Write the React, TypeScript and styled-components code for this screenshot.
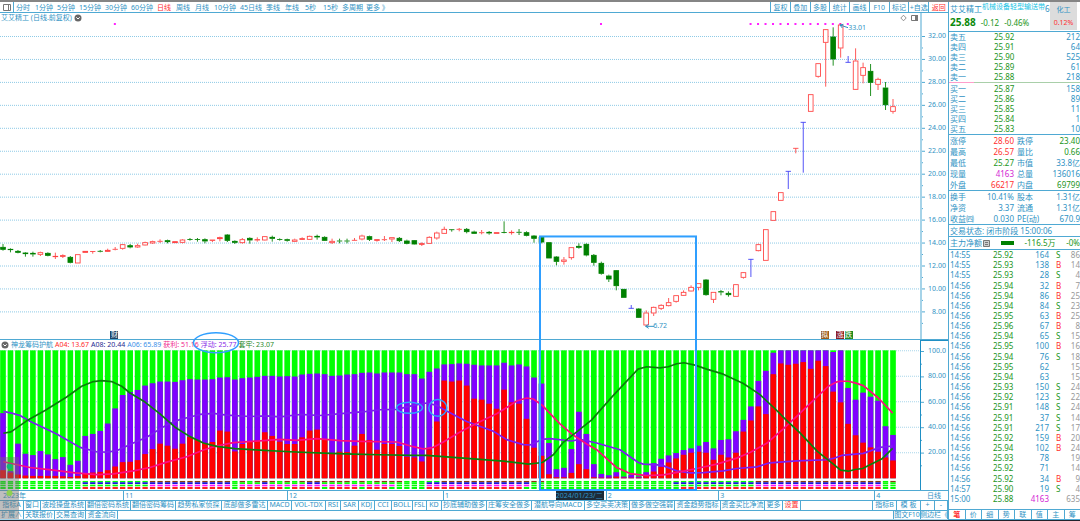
import React from 'react';
import styled, { createGlobalStyle } from 'styled-components';

const c = {
  text: '#2f93c4',
  line: '#4fa9d3',
  pale: '#a6d3e8',
  green: '#1b951b',
  red: '#ff3030',
  magenta: '#d41fd4',
  grey: '#999999',
};

const GlobalStyle = createGlobalStyle`
  * { box-sizing: border-box; }
  body {
    margin: 0;
    background: #fff;
    color: ${c.text};
    font-family: "Noto Sans", "Noto Sans CJK SC", sans-serif;
    font-size: 7px;
    line-height: 10px;
  }
  button {
    margin: 0; padding: 0; border: 0; background: none;
    color: inherit; font: inherit; white-space: nowrap; cursor: pointer;
  }
  table { border-collapse: collapse; width: 100%; }
  td, th { padding: 0; font-weight: normal; }
`;

/* ---------- data ---------- */

type Candle = [kind: 'r' | 'g' | 'b', top: number, bottom: number, high: number, low: number];

const candles: Candle[] = [
  ['g', 141, 149, 132, 152], ['g', 147, 150, 145, 157], ['g', 153, 158, 150, 160], ['g', 158, 162, 156, 170],
  ['g', 159, 163, 155, 170], ['r', 157, 164, 155, 168], ['g', 159, 167, 157, 169], ['r', 168, 171, 158, 177],
  ['r', 166, 170, 163, 174], ['g', 171, 188, 168, 190], ['r', 163, 190, 163, 190], ['r', 153, 158, 153, 158],
  ['r', 154, 155, 153, 161], ['g', 153, 155, 150, 157], ['r', 150, 155, 146, 156], ['r', 147, 149, 141, 151],
  ['r', 133, 146, 132, 149], ['g', 136, 142, 132, 145], ['r', 136, 142, 131, 144], ['r', 127, 136, 125, 137],
  ['r', 124, 130, 122, 132], ['r', 123, 125, 118, 129], ['g', 121, 126, 119, 130], ['r', 124, 129, 124, 129],
  ['r', 119, 128, 117, 130], ['g', 118, 119, 114, 122], ['g', 118, 119, 114, 125], ['g', 118, 124, 115, 130],
  ['r', 119, 122, 119, 126], ['r', 112, 117, 110, 124], ['g', 104, 122, 102, 126], ['g', 123, 128, 121, 132],
  ['r', 118, 129, 114, 131], ['g', 114, 121, 112, 131], ['r', 118, 121, 112, 125], ['r', 109, 121, 108, 122],
  ['g', 111, 116, 107, 125], ['g', 118, 119, 115, 122], ['g', 118, 122, 116, 125], ['r', 119, 125, 116, 126],
  ['r', 115, 119, 112, 120], ['r', 108, 119, 107, 120], ['g', 108, 112, 104, 119], ['g', 111, 122, 109, 123],
  ['r', 123, 129, 116, 132], ['g', 122, 124, 116, 130], ['g', 122, 124, 116, 130], ['r', 120, 122, 114, 123],
  ['r', 107, 118, 104, 121], ['g', 109, 119, 107, 123], ['r', 118, 122, 118, 125], ['r', 118, 120, 108, 123],
  ['r', 112, 118, 112, 126], ['g', 114, 123, 111, 126], ['g', 122, 131, 119, 133], ['g', 121, 133, 120, 134],
  ['r', 130, 134, 127, 138], ['r', 111, 131, 109, 132], ['r', 98, 115, 95, 119], ['r', 87, 101, 80, 102],
  ['g', 88, 90, 87, 95], ['r', 87, 89, 84, 94], ['g', 87, 96, 84, 100], ['g', 95, 101, 92, 102],
  ['r', 97, 99, 90, 103], ['g', 96, 100, 93, 104], ['r', 97, 101, 97, 101], ['g', 97, 98, 64, 100],
  ['r', 96, 99, 91, 104], ['g', 96, 98, 87, 105], ['g', 97, 107, 94, 109], ['g', 107, 116, 105, 128],
  ['g', 111, 127, 108, 130], ['g', 127, 175, 127, 175], ['g', 170, 185, 168, 196], ['r', 179, 185, 171, 194],
  ['r', 142, 174, 142, 179], ['g', 138, 143, 130, 146], ['g', 132, 166, 130, 169], ['g', 165, 188, 162, 197],
  ['g', 189, 221, 185, 224], ['g', 227, 238, 224, 246], ['g', 211, 258, 210, 271], ['g', 267, 293, 267, 293],
  ['b', 325, 325, 315, 325], ['g', 326, 353, 324, 354], ['r', 338, 376, 331, 380], ['r', 321, 340, 320, 348],
  ['r', 315, 326, 313, 330], ['r', 307, 318, 294, 319], ['r', 286, 305, 286, 308], ['r', 276, 287, 271, 288],
  ['r', 261, 274, 256, 275], ['r', 250, 263, 250, 271], ['g', 239, 285, 237, 287], ['r', 276, 299, 276, 309],
  ['g', 274, 277, 270, 286], ['g', 279, 285, 274, 290], ['r', 253, 290, 253, 290], ['r', 217, 233, 216, 236],
  ['b', 178, 178, 178, 231], ['r', 133, 153, 131, 154], ['r', 88, 182, 88, 182], ['r', 34, 62, 34, 62],
  ['r', -23, 2, -23, 2], ['b', -86, -86, -86, -33], ['r', -155, -155, -155, -140], ['b', -233, -233, -233, -82],
  ['r', -317, -265, -317, -265], ['r', -410, -370, -410, -367], ['r', -512, -472, -513, -340], ['g', -490, -422, -518, -403],
  ['r', -526, -455, -530, -427], ['b', -413, -413, -432, -413], ['r', -418, -331, -455, -330], ['r', -398, -373, -412, -350],
  ['g', -387, -352, -408, -312], ['r', -363, -346, -367, -330], ['g', -337, -285, -354, -270], ['r', -281, -265, -303, -259],
];

const floating = [
  187, 360, 278, 308, 312, 300, 310, 324, 318, 341, 329, 255, 249, 240, 218, 173, 133, 124, 118, 105,
  98, 93, 93, 94, 89, 86, 87, 87, 86, 81, 80, 87, 83, 81, 79, 76, 76, 78, 77, 78,
  72, 70, 69, 71, 76, 75, 72, 71, 67, 66, 69, 66, 66, 66, 71, 71, 84, 64, 54, 42,
  41, 39, 40, 43, 45, 45, 45, 37, 45, 42, 48, 81, 99, 276, 354, 350, 294, 183, 249, 339,
  368, 372, 363, 376, 371, 376, 363, 336, 323, 313, 306, 297, 292, 284, 273, 292, 267, 265, 241, 207,
  167, 91, 61, 7, 0, 0, 0, 0, 0, 0, 0, 5, 0, 112, 147, 126, 138, 150, 226, 252,
];

const profit = [
  358, 365, 371, 374, 375, 375, 375, 375, 376, 378, 375, 368, 365, 363, 358, 347, 334, 333, 328, 310,
  295, 279, 285, 294, 279, 259, 268, 277, 274, 240, 243, 302, 280, 273, 270, 245, 256, 273, 280, 280,
  260, 240, 237, 267, 308, 303, 304, 285, 250, 268, 297, 280, 280, 286, 318, 320, 332, 296, 213, 91,
  94, 91, 106, 145, 148, 160, 175, 118, 156, 160, 205, 291, 315, 370, 379, 379, 366, 340, 355, 379,
  380, 380, 377, 380, 380, 380, 375, 362, 348, 335, 323, 312, 306, 303, 306, 327, 312, 320, 306, 243,
  210, 168, 191, 72, 40, 44, 41, 36, 56, 32, 48, 124, 156, 220, 254, 276, 290, 303, 320, 329,
];

type Point = [number, number];

const trapLine: Point[] = [
  [10, 248], [33, 244], [80, 211], [135, 180], [200, 140], [245, 108], [280, 94], [305, 91], [335, 94], [365, 108],
  [390, 128], [435, 155], [480, 190], [525, 230], [570, 258], [610, 277], [650, 287], [705, 294], [780, 298], [870, 303],
  [970, 307], [1060, 310], [1140, 312], [1240, 314], [1280, 314], [1400, 323], [1510, 331], [1585, 340], [1627, 335], [1660, 312],
  [1690, 275], [1735, 240], [1775, 208], [1840, 135], [1914, 57], [1940, 50], [1980, 53], [2005, 50], [2030, 41], [2052, 38],
  [2085, 45], [2120, 57], [2170, 72], [2230, 100], [2280, 133], [2325, 175], [2358, 208], [2400, 247], [2452, 302], [2500, 340],
  [2522, 358], [2545, 361], [2565, 356], [2588, 353], [2610, 342], [2645, 325], [2678, 293],
];

const profitLine: Point[] = [
  [10, 333], [90, 350], [160, 358], [225, 366], [290, 371], [340, 369], [400, 360], [450, 350], [500, 334], [560, 318],
  [610, 298], [650, 286], [700, 276], [790, 270], [840, 266], [890, 269], [950, 264], [1020, 270], [1080, 272], [1190, 274],
  [1240, 288], [1270, 295], [1300, 290], [1330, 274], [1380, 244], [1430, 218], [1490, 190], [1530, 165], [1550, 152], [1580, 143],
  [1600, 146], [1627, 165], [1680, 220], [1715, 250], [1760, 280], [1790, 297], [1850, 350], [1890, 368], [1940, 374], [1990, 372],
  [2040, 363], [2090, 353], [2150, 340], [2210, 322], [2250, 305], [2300, 278], [2350, 235], [2390, 198], [2440, 150], [2485, 108],
  [2510, 95], [2522, 93], [2545, 93], [2565, 98], [2590, 106], [2635, 143], [2678, 188],
];

const floatLine: Point[] = [
  [10, 183], [35, 188], [60, 195], [90, 212], [170, 250], [240, 290], [290, 303], [320, 304], [350, 300], [400, 277],
  [440, 260], [500, 223], [540, 207], [600, 192], [640, 189], [680, 194], [750, 198], [800, 196], [840, 199], [900, 192],
  [960, 195], [1040, 188], [1100, 183], [1140, 178], [1190, 177], [1240, 165], [1280, 158], [1310, 165], [1340, 182], [1400, 213],
  [1480, 242], [1520, 267], [1570, 282], [1590, 283], [1627, 266], [1650, 264], [1715, 271], [1740, 266], [1790, 277], [1860, 297],
  [1915, 335], [1930, 340], [1985, 343], [2030, 360], [2070, 366], [2110, 365], [2170, 360], [2210, 353], [2270, 348], [2310, 336],
  [2390, 330], [2480, 327], [2500, 323], [2525, 314], [2590, 308], [2640, 290], [2678, 286],
];

const periods: [string, number][] = [
  ['分时', 19], ['1分钟', 22], ['5分钟', 22], ['15分钟', 26], ['30分钟', 26], ['60分钟', 26], ['日线', 19], ['周线', 19],
  ['月线', 19], ['10分钟', 26], ['45日线', 26], ['季线', 19], ['年线', 20], ['5秒', 18], ['15秒', 19], ['多周期', 24], ['更多 》', 24],
];
const tools = ['复权', '叠加', '多股', '统计', '画线', 'F10', '标记', '+自选', '返回'];

const indicatorTabs: [string, number][] = [
  ['指标A', 24], ['窗口', 17], ['波段操盘系统', 45], ['翻倍密码系统', 45], ['翻倍密码筹码', 45], ['趋势私家侦探', 46],
  ['底部做多雷达', 46], ['MACD', 24], ['VOL-TDX', 34], ['RSI', 15], ['SAR', 18], ['KDJ', 16], ['CCI', 17], ['BOLL', 21],
  ['FSL', 14], ['KD', 15], ['抄底辅助做多', 45], ['庄筹安全做多', 45], ['潜航导向MACD', 53], ['多空买卖决策', 45],
  ['做多做空强弱', 45], ['资金趋势指标', 46], ['资金买比净流', 44], ['更多', 18], ['设置', 18],
];
const extensionTabs: [string, number][] = [['扩展∧', 24], ['关联报价', 31], ['交易查询', 31], ['资金流向', 32]];

const legend: [string, string][] = [
  ['A04: 13.67', '#ff2a2a'], ['A08: 20.44', '#1f1f8f'], ['A06: 65.89', '#3b8fe8'],
  ['获利: 51.16', '#f0288c'], ['浮动: 25.77', '#8a2be8'], ['套牢: 23.07', '#2a8a2a'],
];

const sells = [['卖五', '25.92', '212'], ['卖四', '25.91', '64'], ['卖三', '25.90', '525'], ['卖二', '25.89', '61'], ['卖一', '25.88', '218']];
const buys = [['买一', '25.87', '158'], ['买二', '25.86', '89'], ['买三', '25.85', '11'], ['买四', '25.84', '1'], ['买五', '25.83', '10']];

type Stat = [string, string, string, string, string, string];
const stats: Stat[] = [
  ['涨停', '28.60', c.red, '跌停', '23.40', c.green],
  ['最高', '26.57', c.red, '量比', '0.66', c.green],
  ['最低', '25.27', c.green, '市值', '33.8亿', c.text],
  ['现量', '4163', c.magenta, '总量', '136016', c.text],
  ['外盘', '66217', c.red, '内盘', '69799', c.green],
];
const finance: Stat[] = [
  ['换手', '10.41%', c.text, '股本', '1.31亿', c.text],
  ['净资', '3.37', c.text, '流通', '1.31亿', c.text],
  ['收益㈣', '0.030', c.text, 'PE(动)', '670.9', c.text],
];

const ticks = `14:55 25.92 164 S 86
14:55 25.93 138 B 14
14:55 25.93 28 S 4
14:56 25.94 32 B 7
14:56 25.94 86 B 25
14:56 25.94 84 S 23
14:56 25.95 63 B 25
14:56 25.96 67 B 8
14:56 25.94 65 S 15
14:56 25.95 100 B 16
14:56 25.94 76 S 18
14:56 25.95 62 - 15
14:56 25.94 63 - 15
14:56 25.93 150 S 24
14:56 25.92 123 S 22
14:56 25.91 148 S 24
14:56 25.91 37 S 14
14:56 25.91 217 S 17
14:56 25.92 159 B 20
14:56 25.94 102 B 24
14:56 25.93 78 - 19
14:56 25.92 71 - 14
14:56 25.92 34 B 9
14:57 25.90 19 S 4
15:00 25.88 4163 - 635`.split('\n').map((row) => row.split(' '));

/* ---------- layout ---------- */

const Page = styled.div`
  display: flex;
  flex-direction: column;
  min-height: 100vh;
  border-top: 2px solid #858585;
  border-bottom: 2px solid #20222c;
  overflow: hidden;
`;
const Columns = styled.div`
  flex: 1;
  display: flex;
`;
const Main = styled.main`
  flex: 1;
  min-width: 0;
  display: flex;
  flex-direction: column;
`;
const Toolbar = styled.nav`
  display: flex;
  height: 11px;
  line-height: 9px;
  border-bottom: 1px solid ${c.line};
`;
const LayoutToggle = styled.button`
  width: 14px;
  border-right: 1px solid ${c.line};
  display: flex;
  align-items: center;
  justify-content: center;
`;
const Periods = styled.div`
  flex: 1;
  display: flex;
  padding-left: 2px;
`;
const Period = styled.button<{ $w: number; $active?: boolean }>`
  flex: 0 0 ${(p) => p.$w}px;
  text-align: left;
  color: ${(p) => (p.$active ? c.red : 'inherit')};
`;
const Tools = styled.div`
  display: flex;
  width: 178px;
`;
const Tool = styled.button<{ $hot?: boolean }>`
  flex: 1 1 0;
  min-width: 0;
  overflow: hidden;
  border-left: 1px solid ${c.line};
  color: ${(p) => (p.$hot ? c.red : 'inherit')};
`;
const Charts = styled.div`
  position: relative;
  flex: 1;
  display: flex;
  flex-direction: column;
`;
const Pane = styled.section<{ $grow?: boolean }>`
  display: flex;
  flex: ${(p) => (p.$grow ? '1 0 327px' : '0 0 150px')};
  border-bottom: 1px solid ${c.line};
`;
const Plot = styled.div`
  position: relative;
  flex: 1;
  min-width: 0;
  display: flex;
  flex-direction: column;
`;
const PaneTitle = styled.header`
  display: flex;
  align-items: center;
  gap: 2px;
  height: 10px;
  padding-left: 1px;
  white-space: nowrap;
`;
const TitleTools = styled.span`
  display: flex;
  gap: 4px;
  margin-left: auto;
  padding-right: 2px;
`;
const LegendItem = styled.span<{ $color: string }>`
  color: ${(p) => p.$color};
`;
const Drawing = styled.svg`
  display: block;
  flex: 1 1 0;
  width: 100%;
  min-height: 0;
`;
const Overlay = styled.svg`
  position: absolute;
  inset: 0 28px 0 0;
  width: calc(100% - 28px);
  height: 100%;
  pointer-events: none;
`;
const Axis = styled.div<{ $strong?: boolean }>`
  width: 28px;
  display: flex;
  border-left: ${(p) => (p.$strong ? `1px solid #1f8fc4` : `2px solid ${c.pale}`)};
  border-top: ${(p) => (p.$strong ? `1px solid #1f8fc4` : '0')};
  svg { width: 4px; height: 100%; }
`;
const Scale = styled.div<{ $top: number; $bottom: number }>`
  flex: 1;
  display: flex;
  flex-direction: column;
  justify-content: space-between;
  align-items: flex-end;
  padding: ${(p) => p.$top}px 2px ${(p) => p.$bottom}px 0;
`;
const PriceNote = styled.span<{ $x: number; $y: number }>`
  position: absolute;
  left: ${(p) => p.$x}%;
  top: ${(p) => p.$y}%;
`;
const Mark = styled.span<{ $x: number; $color: string }>`
  position: absolute;
  left: ${(p) => p.$x}%;
  bottom: 0;
  width: 8px;
  height: 8px;
  line-height: 8px;
  text-align: center;
  color: #fff;
  background: ${(p) => p.$color};
`;
const TimeAxis = styled.div`
  display: flex;
  height: 10px;
  border-bottom: 1px solid ${c.line};
`;
const Month = styled.div<{ $span: number }>`
  flex: ${(p) => p.$span} 0 0;
  display: flex;
  justify-content: space-between;
  padding: 0 2px 0 1px;
  border-left: 1px solid ${c.line};
  line-height: 9px;
  white-space: nowrap;
  &:first-child { border-left: 0; padding-left: 3px; }
`;
const Cursor = styled.span`
  width: 48px;
  background: #1d2b38;
`;
const AxisUnit = styled.button`
  width: 28px;
  line-height: 9px;
`;
const TabRow = styled.div`
  display: flex;
  height: 10px;
  line-height: 8px;
  border-bottom: 1px solid ${c.line};
  &:last-child { height: 9px; border-bottom-color: ${c.pale}; }
`;
const Tab = styled.button<{ $w: number; $hot?: boolean; $end?: boolean }>`
  display: flex;
  justify-content: center;
  flex: 0 0 ${(p) => p.$w}px;
  margin-left: ${(p) => (p.$end ? 'auto' : 0)};
  border-right: 1px solid ${c.line};
  border-left: ${(p) => (p.$end ? `1px solid ${c.line}` : 0)};
  overflow: hidden;
  color: ${(p) => (p.$hot ? c.red : 'inherit')};
`;
const CornerWidget = styled.aside`
  position: absolute;
  left: 0;
  bottom: 2px;
  width: 19px;
  height: 62px;
  background: rgba(110, 110, 110, 0.45);
`;

const Side = styled.aside`
  width: 132px;
  display: flex;
  flex-direction: column;
  border-left: 1px solid ${c.line};
  font-size: 8px;
  color: ${c.text};
`;
const Quote = styled.header`
  display: flex;
  height: 30px;
  padding-left: 1px;
  border-bottom: 1px solid ${c.line};
`;
const QuoteMain = styled.div`
  flex: 1;
  min-width: 0;
  overflow: hidden;
`;
const NameRow = styled.div`
  display: flex;
  height: 13px;
  line-height: 13px;
  white-space: nowrap;
`;
const Sector = styled.span`
  line-height: 9px;
  font-size: 7px;
  color: #19c4e4;
`;
const PriceRow = styled.div`
  display: flex;
  gap: 5px;
  line-height: 15px;
  color: ${c.green};
  white-space: nowrap;
  strong { font-size: 10px; color: #0c8a0c; }
`;
const Badge = styled.button`
  width: 27px;
  height: 28px;
  margin-right: 3px;
  background: #dcdcdc;
  line-height: 13px;
  font-size: 7px;
  span { display: block; color: ${c.red}; }
`;
const Book = styled.table<{ $buy?: boolean }>`
  margin-top: ${(p) => (p.$buy ? 1 : 0)}px;
  border-bottom: ${(p) => (p.$buy ? `1px solid ${c.line}` : '0')};
  th { width: 45px; text-align: left; padding-left: 1px; }
  td { color: ${c.green}; }
  td:last-child { text-align: right; color: ${c.text}; }
`;
const Ratio = styled.div`
  display: flex;
  height: 1px;
  background: #a9cfa9;
  &::before { content: ''; width: 25px; background: #ff9ecb; }
`;
const StatTable = styled.table`
  table-layout: fixed;
  line-height: 11px;
  border-bottom: 1px solid ${c.line};
  th { text-align: left; padding-left: 1px; white-space: nowrap; }
  td { text-align: right; }
`;
const StatValue = styled.td<{ $color: string }>`
  color: ${(p) => p.$color};
`;
const StatusLine = styled.div`
  display: flex;
  justify-content: space-between;
  align-items: center;
  height: 12px;
  padding-left: 1px;
  border-bottom: 1px solid ${c.line};
  white-space: nowrap;
`;
const Flow = styled(StatusLine)`
  height: 13px;
  span { color: ${c.green}; }
  i { width: 13px; height: 4px; background: #008000; }
`;
const FlowLabel = styled.b`
  display: flex;
  align-items: center;
  gap: 1px;
  font-weight: 400;
`;
const Ticks = styled.table`
  flex: 1;
  display: flex;
  tbody { flex: 1; display: flex; flex-direction: column; padding-bottom: 5px; }
  tr { flex: 1; display: flex; align-items: center; }
  td:nth-child(1) { width: 44px; padding-left: 1px; }
  td:nth-child(2) { width: 26px; color: ${c.green}; }
  td:nth-child(3) { width: 30px; text-align: right; }
  td:nth-child(4) { width: 12px; padding-left: 7px; }
  td:nth-child(5) { flex: 1; text-align: right; color: ${c.grey}; }
`;
const Volume = styled.td<{ $big: boolean }>`
  color: ${(p) => (p.$big ? c.magenta : c.text)};
`;
const Direction = styled.td<{ $buy: boolean }>`
  color: ${(p) => (p.$buy ? c.red : c.green)};
`;
const SideTabs = styled.nav`
  display: flex;
  height: 11px;
  line-height: 9px;
  font-size: 7px;
  border: solid ${c.line};
  border-width: 1px 0;
`;
const SideTab = styled.button<{ $active: boolean }>`
  flex: 1;
  border-right: 1px solid ${c.line};
  color: ${(p) => (p.$active ? c.red : 'inherit')};
  font-weight: ${(p) => (p.$active ? 700 : 400)};
  &:last-child { border-right: 0; }
`;

/* ---------- drawings ---------- */

const STEP = 22.437;
const BASE = 531;
const cx = (i: number) => 9 + STEP * i;
const toPoints = (pts: Point[]) => pts.map((p) => p.join(',')).join(' ');
const candleColor = { r: '#ff4040', g: '#008000', b: '#3a3af5' };

function CandleMark({ i, data }: { i: number; data: Candle }) {
  const [kind, top, bottom, high, low] = data;
  const x = cx(i);
  const color = candleColor[kind];
  const hollow = kind === 'r' && bottom - top > 5;
  return (
    <g stroke={color} strokeWidth={2.6} fill={hollow ? '#fff' : color}>
      {high < top && <line x1={x} x2={x} y1={BASE + high} y2={BASE + top} />}
      {low > bottom && <line x1={x} x2={x} y1={BASE + bottom} y2={BASE + low} />}
      {bottom - top > 2
        ? <rect x={x - 7} y={BASE + top + 1} width={14} height={Math.max(bottom - top - 2, 1)} />
        : <line x1={x - 8} x2={x + 8} y1={BASE + (top + bottom) / 2} y2={BASE + (top + bottom) / 2} />}
    </g>
  );
}

function PriceDrawing() {
  const dots = [15, 80, ...Array.from({ length: 14 }, (_, i) => 100 + i)];
  return (
    <Drawing viewBox="0 0 2760 948" preserveAspectRatio="none" role="img" aria-label="日线K线图">
      {Array.from({ length: 13 }, (_, i) => (
        <line key={i} x1={0} x2={2760} y1={40.5 + 68.85 * i} y2={40.5 + 68.85 * i} stroke="#8ecae6" strokeWidth={3} strokeDasharray="3 3" />
      ))}
      {dots.map((i) => <rect key={i} x={cx(i) - 4} y={0} width={6} height={6} fill="#ff20ff" />)}
      {candles.map((d, i) => <CandleMark key={i} i={i} data={d} />)}
      <path d="M2520 6 L2544 14 M2520 6 L2530 4 M2520 6 L2527 15 M1937 910 H1962 M1937 910 L1946 904 M1937 910 L1946 916" stroke={c.text} strokeWidth={3} fill="none" />
    </Drawing>
  );
}

const within = (i: number, ranges: Point[]) => ranges.some(([a, b]) => i >= a && i <= b);

function StripMarks({ i }: { i: number }) {
  const x = cx(i) - 8;
  const lime = '#00ff00';
  const rows: [number, number, string][] = [
    [390, 4, within(i, [[20, 30], [32, 32], [34, 36], [38, 38], [40, 46], [48, 48], [50, 53], [59, 72], [101, 117], [119, 119]]) ? '#8a3a10' : lime],
    [394, 5, within(i, [[11, 30], [35, 35], [41, 42], [57, 70], [90, 117]]) ? '#0a10d8' : lime],
    [401, 5, within(i, [[20, 30], [32, 52], [57, 70], [101, 117]]) ? '#ff10ff' : lime],
    [408, 6, within(i, [[11, 30], [32, 37], [39, 42], [44, 47], [49, 51], [57, 69], [91, 117]]) ? '#ff2020' : lime],
  ];
  return <>{rows.map(([y, h, fill]) => <rect key={y} x={x} y={y} width={16} height={h} fill={fill} />)}</>;
}

function IndicatorDrawing() {
  return (
    <Drawing viewBox="0 0 2760 417" preserveAspectRatio="none" role="img" aria-label="筹码护航指标">
      {[2, 78, 154, 230, 306].map((y) => (
        <line key={y} x1={0} x2={2760} y1={y} y2={y} stroke="#a9d6ea" strokeWidth={3} strokeDasharray="3 3" />
      ))}
      {floating.map((f, i) => (
        <g key={i}>
          <rect x={cx(i) - 8.5} y={1} width={17} height={381} fill="#00ff00" />
          <rect x={cx(i) - 8.5} y={f + 1} width={17} height={381 - f} fill="#8000ff" />
          <rect x={cx(i) - 8.5} y={profit[i]} width={17} height={382 - profit[i]} fill="#ff0000" />
          <StripMarks i={i} />
        </g>
      ))}
      <g fill="none" strokeWidth={5} strokeLinejoin="round">
        <polyline points={toPoints(floatLine)} stroke="#7d1cf2" />
        <polyline points={toPoints(profitLine)} stroke="#ff0a80" />
        <polyline points={toPoints(trapLine)} stroke="#0a800a" />
      </g>
    </Drawing>
  );
}

function DropIcon() {
  return (
    <svg width="8" height="8" viewBox="0 0 8 8" aria-hidden="true">
      <circle cx="4" cy="4" r="3.5" fill="#666" />
      <path d="M2.3 3.3 L4 5 L5.7 3.3" fill="none" stroke="#fff" strokeWidth="1" />
    </svg>
  );
}

function StatRows({ rows }: { rows: Stat[] }) {
  return (
    <StatTable>
      <colgroup><col style={{ width: 28 }} /><col style={{ width: 37 }} /><col style={{ width: 27 }} /><col /></colgroup>
      <tbody>
        {rows.map(([a, av, ac, b, bv, bc]) => (
          <tr key={a}>
            <th scope="row">{a}</th><StatValue $color={ac}>{av}</StatValue>
            <th scope="row">&nbsp;{b}</th><StatValue $color={bc}>{bv}</StatValue>
          </tr>
        ))}
      </tbody>
    </StatTable>
  );
}

function BookRows({ rows, buy }: { rows: string[][]; buy?: boolean }) {
  return (
    <Book $buy={buy}>
      <tbody>
        {rows.map(([name, price, qty]) => <tr key={name}><th scope="row">{name}</th><td>{price}</td><td>{qty}</td></tr>)}
      </tbody>
    </Book>
  );
}

function AxisTicks({ height, marks }: { height: number; marks: number[] }) {
  return (
    <svg viewBox={`0 0 4 ${height}`} preserveAspectRatio="none" aria-hidden="true">
      {marks.map((y, i) => <line key={y} x1={0} x2={i % 2 ? 1 : 3} y1={y} y2={y} stroke={c.line} />)}
    </svg>
  );
}

export default function App() {
  return (
    <Page>
      <GlobalStyle />
      <Columns>
        <Main>
          <Toolbar>
            <LayoutToggle aria-label="切换布局">
              <svg width="8" height="7" viewBox="0 0 8 7"><path d="M.5 .5h7v6h-7z M5.5 .5v6" fill="none" stroke="#777" /></svg>
            </LayoutToggle>
            <Periods>
              {periods.map(([name, w]) => <Period key={name} $w={w} $active={name === '日线'}>{name}</Period>)}
            </Periods>
            <Tools>
              {tools.map((t) => <Tool key={t} $hot={t === '返回'}>{t}</Tool>)}
            </Tools>
          </Toolbar>

          <Charts>
            <Pane $grow>
              <Plot>
                <PaneTitle>
                  艾艾精工 (日线.前复权) <DropIcon />
                  <TitleTools>
                    <svg width="7" height="8" viewBox="0 0 7 8"><path d="M3.5 1.2 L6.2 4 L3.5 6.8 L.8 4z" fill="none" stroke="#777" strokeWidth=".8" /></svg>
                    <svg width="7" height="8" viewBox="0 0 7 8"><path d="M.5 1.5h6v5h-6z" fill="none" stroke="#777" /><path d="M4 1h3v6H4z" fill="#777" /></svg>
                  </TitleTools>
                </PaneTitle>
                <PriceDrawing />
                <PriceNote $x={92.2} $y={3}>33.01</PriceNote>
                <PriceNote $x={71} $y={94.4}>6.72</PriceNote>
                <Mark $x={12} $color="#1d4468">财</Mark>
                <Mark $x={89.2} $color="#9a5a1c">拟</Mark>
                <Mark $x={90.9} $color="#8c1c24">涨</Mark>
                <Mark $x={91.8} $color="#1f8a1f">跌</Mark>
              </Plot>
              <Axis>
                <AxisTicks height={326} marks={Array.from({ length: 26 }, (_, i) => 23.5 + 11.475 * i)} />
                <Scale $top={18} $bottom={22}>
                  {Array.from({ length: 13 }, (_, i) => <span key={i}>{(32 - i * 2).toFixed(2)}</span>)}
                </Scale>
              </Axis>
            </Pane>
            <Pane>
              <Plot>
                <PaneTitle>
                  <DropIcon />神龙筹码护航
                  {legend.map(([t, color]) => <LegendItem key={t} $color={color}>{t}</LegendItem>)}
                </PaneTitle>
                <IndicatorDrawing />
              </Plot>
              <Axis $strong>
                <AxisTicks height={149} marks={Array.from({ length: 10 }, (_, i) => 10.5 + 12.7 * i)} />
                <Scale $top={5} $bottom={33}>
                  {['100.0', '80.00', '60.00', '40.00', '20.00'].map((v) => <span key={v}>{v}</span>)}
                </Scale>
              </Axis>
            </Pane>
            <Overlay viewBox="0 13 920 477" preserveAspectRatio="none" aria-hidden="true">
              <g fill="none" stroke="#2f9fff">
                <rect x="540" y="236" width="156" height="253" strokeWidth="2" />
                <ellipse cx="216" cy="342" rx="22.5" ry="10" strokeWidth="1.5" />
                <ellipse cx="409.5" cy="407" rx="13" ry="5.5" strokeWidth="1.5" />
                <ellipse cx="437.8" cy="407" rx="9" ry="8.3" strokeWidth="1.5" />
              </g>
            </Overlay>
          </Charts>

          <TimeAxis>
            <Month $span={122}>2023年</Month>
            <Month $span={165}>11</Month>
            <Month $span={157}>12</Month>
            <Month $span={164}>1<Cursor>2024/01/23/二</Cursor></Month>
            <Month $span={112}>2</Month>
            <Month $span={157}>3</Month>
            <Month $span={43}>4</Month>
            <AxisUnit>日线</AxisUnit>
          </TimeAxis>
          <TabRow>
            {indicatorTabs.map(([t, w]) => <Tab key={t} $w={w} $hot={t === '设置'}>{t}</Tab>)}
            <Tab $w={25} $end>指标B</Tab>
            <Tab $w={24}>模 板</Tab>
            <Tab $w={14}>+</Tab>
            <Tab $w={13}>-</Tab>
          </TabRow>
          <TabRow>
            {extensionTabs.map(([t, w]) => <Tab key={t} $w={w}>{t}</Tab>)}
            <Tab $w={28} $end>图文F10</Tab>
            <Tab $w={27}>侧边栏《</Tab>
          </TabRow>
        </Main>

        <Side>
          <Quote>
            <QuoteMain>
              <NameRow>艾艾精工<Sector>机械设备轻型输送带</Sector>60</NameRow>
              <PriceRow><strong>25.88</strong><span>-0.12</span><span>-0.46%</span></PriceRow>
            </QuoteMain>
            <Badge>化工<span>0.12%</span></Badge>
          </Quote>
          <BookRows rows={sells} />
          <Ratio />
          <BookRows rows={buys} buy />
          <StatRows rows={stats} />
          <StatRows rows={finance} />
          <StatusLine>交易状态: 闭市阶段 15:00:06</StatusLine>
          <Flow>
            <FlowLabel>
              主力净额
              <svg width="7" height="7" viewBox="0 0 7 7" aria-hidden="true"><path d="M.5 .5h6v6h-6z M2 2.5h3 M2 4.5h3" fill="#ccc" stroke="#777" /></svg>
            </FlowLabel>
            <i /><span>-116.5万</span><span>-0%</span>
          </Flow>
          <Ticks>
            <tbody>
              {ticks.map(([time, price, vol, dir, n], i) => (
                <tr key={i}>
                  <td>{time}</td><td>{price}</td>
                  <Volume $big={vol === '4163'}>{vol}</Volume>
                  <Direction $buy={dir === 'B'}>{dir === '-' ? '' : dir}</Direction>
                  <td>{n}</td>
                </tr>
              ))}
            </tbody>
          </Ticks>
          <SideTabs>
            {['笔', '价', '细', '势', '联', '值', '主', '筹'].map((t) => <SideTab key={t} $active={t === '笔'}>{t}</SideTab>)}
          </SideTabs>
        </Side>
      </Columns>
      <CornerWidget aria-label="悬浮工具">
        <svg width="19" height="62" viewBox="0 0 19 62"><circle cx="9.5" cy="9.5" r="2.8" fill="#12b878" /><circle cx="9.5" cy="36" r="3" fill="#8fd050" /></svg>
      </CornerWidget>
    </Page>
  );
}
